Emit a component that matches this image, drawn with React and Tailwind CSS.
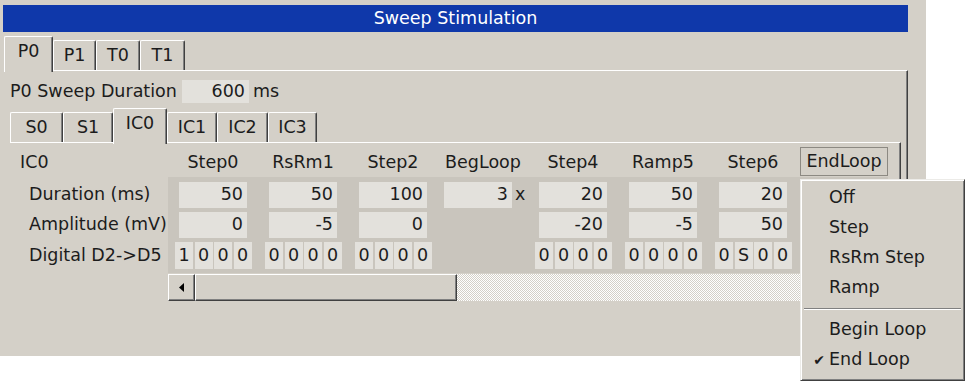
import React from "react";

const cols = [
  { name: "Step0", dur: "50", amp: "0", dig: ["1", "0", "0", "0"] },
  { name: "RsRm1", dur: "50", amp: "-5", dig: ["0", "0", "0", "0"] },
  { name: "Step2", dur: "100", amp: "0", dig: ["0", "0", "0", "0"] },
  { name: "BegLoop", loop: "3" },
  { name: "Step4", dur: "20", amp: "-20", dig: ["0", "0", "0", "0"] },
  { name: "Ramp5", dur: "50", amp: "-5", dig: ["0", "0", "0", "0"] },
  { name: "Step6", dur: "20", amp: "50", dig: ["0", "S", "0", "0"] },
  { name: "EndLoop", end: true },
];

function Tab({ label, w, active }) {
  if (active) {
    return (
      <div
        className={`relative z-10 -mb-[2px] h-[36px] ${w} bg-[#d4d0c8] border-l border-t border-white rounded-tl-[2px] rounded-tr-[2px] border-r border-r-[#404040] shadow-[inset_-1px_0_0_#808080] flex items-center justify-center pb-[6px]`}
      >
        {label}
      </div>
    );
  }
  return (
    <div
      className={`h-[30px] ${w} bg-[#d4d0c8] border-l border-t border-white rounded-tl-[2px] rounded-tr-[2px] border-r border-r-[#404040] shadow-[inset_-1px_0_0_#808080] flex items-center justify-center`}
    >
      {label}
    </div>
  );
}

function Field({ value, className = "" }) {
  return (
    <div className={`h-[26px] w-[68px] bg-[#e3e1dc] flex items-center justify-end pr-[4px] ${className}`}>
      {value}
    </div>
  );
}

function Digits({ values }) {
  return (
    <div className="ml-[7px] flex gap-[1.5px]">
      {values.map((v, i) => (
        <div key={i} className="h-[27px] w-[18px] bg-[#e3e1dc] flex items-center justify-center">
          {v}
        </div>
      ))}
    </div>
  );
}

function MenuItem({ label, checked }) {
  return (
    <div className="h-[30px] flex items-center">
      <div className="w-[28px] flex justify-end pr-[4px] text-[14px]">{checked ? "✔" : ""}</div>
      <span>{label}</span>
    </div>
  );
}

export default function App() {
  return (
    <div className="relative w-[967px] h-[381px] bg-white overflow-hidden font-['DejaVu_Sans',sans-serif] text-[17.5px] text-[#1c1c1c] leading-none">
      <div className="w-[926px] h-[356px] bg-[#d4d0c8] flex flex-col pl-[3px] pt-[5px]">
        <div className="w-[905px] h-[27px] bg-[#0f38aa] text-white flex items-center justify-center">
          Sweep Stimulation
        </div>

        <div className="h-[38px] flex items-end pl-[1px]">
          <Tab label="P0" w="w-[49px]" active />
          <Tab label="P1" w="w-[43px]" />
          <Tab label="T0" w="w-[44px]" />
          <Tab label="T1" w="w-[45px]" />
        </div>

        <div className="ml-[1px] w-[904px] flex-1 flex flex-col border-t border-white border-r border-r-[#404040] shadow-[inset_-1px_0_0_#808080] pl-[6px] pt-[9px]">
          <div className="h-[23px] flex items-center">
            <span className="w-[172px]">P0 Sweep Duration</span>
            <div className="h-[23px] w-[67px] bg-[#e3e1dc] flex items-center justify-end pr-[4px]">600</div>
            <span className="ml-[4px]">ms</span>
          </div>

          <div className="h-[39px] flex items-end">
            <Tab label="S0" w="w-[53px]" />
            <Tab label="S1" w="w-[50px]" />
            <Tab label="IC0" w="w-[54px]" active />
            <Tab label="IC1" w="w-[50px]" />
            <Tab label="IC2" w="w-[51px]" />
            <Tab label="IC3" w="w-[49px]" />
          </div>

          <div className="w-[891px] flex-1 flex flex-col border-t border-white border-r border-r-[#404040] shadow-[inset_-1px_0_0_#808080] pl-[1px] pt-[4px]">
            <div className="h-[29px] flex items-center">
              <div className="w-[157px] pl-[9px] pt-[2px]">IC0</div>
              {cols.map((c) =>
                c.end ? (
                  <div key={c.name} className="w-[90px] pl-[2px]">
                    <div className="h-[29px] w-[88px] border border-[#8c8982] flex items-center justify-center">
                      {c.name}
                    </div>
                  </div>
                ) : (
                  <div key={c.name} className="w-[90px] text-center pt-[2px]">
                    {c.name}
                  </div>
                )
              )}
            </div>

            <div className="mt-[1px] flex">
              <div className="w-[157px] pl-[18px] pt-[5px] flex flex-col gap-[4px]">
                <div className="h-[26px] flex items-center">Duration (ms)</div>
                <div className="h-[26px] flex items-center">Amplitude (mV)</div>
                <div className="h-[27px] flex items-center">Digital D2-&gt;D5</div>
              </div>
              <div className="w-[720px] bg-[#c9c5bd] pt-[5px] pb-[4px] flex">
                {cols.map((c) => (
                  <div key={c.name} className="w-[90px] flex flex-col gap-[4px]">
                    {c.loop ? (
                      <div className="h-[26px] flex items-center">
                        <Field value={c.loop} className="ml-[6px]" />
                        <span className="ml-[3px]">x</span>
                      </div>
                    ) : c.dur ? (
                      <>
                        <Field value={c.dur} className="ml-[11px]" />
                        <Field value={c.amp} className="ml-[11px]" />
                        <Digits values={c.dig} />
                      </>
                    ) : null}
                  </div>
                ))}
              </div>
            </div>

            <div className="mt-[1px] ml-[157px] w-[720px] h-[27px] flex bg-[repeating-conic-gradient(#ffffff_0%_25%,#d4d0c8_0%_50%)] bg-[length:2px_2px]">
              <div className="w-[27px] h-[27px] bg-[#d4d0c8] border-t border-l border-white border-b border-r border-b-[#404040] border-r-[#404040] shadow-[inset_-1px_-1px_0_#808080] flex items-center justify-center">
                <svg width="5" height="9" viewBox="0 0 5 9">
                  <polygon points="5,0 5,9 0,4.5" fill="#000" />
                </svg>
              </div>
              <div className="w-[262px] h-[27px] bg-[#d4d0c8] border-t border-l border-white border-b border-r border-b-[#404040] border-r-[#404040] shadow-[inset_-1px_-1px_0_#808080]" />
            </div>
          </div>
        </div>
      </div>

      <div className="absolute left-[800px] top-[179px] w-[165px] h-[202px] bg-[#d4d0c8] border-t border-l border-[#ecebe8] border-r border-b border-r-[#404040] border-b-[#404040] shadow-[inset_1px_1px_0_#ffffff,inset_-1px_-1px_0_#808080] pt-[3px] flex flex-col">
        <MenuItem label="Off" />
        <MenuItem label="Step" />
        <MenuItem label="RsRm Step" />
        <MenuItem label="Ramp" />
        <div className="h-[12px] flex flex-col justify-center px-[3px]">
          <div className="h-px bg-[#808080]" />
          <div className="h-px bg-white" />
        </div>
        <MenuItem label="Begin Loop" />
        <MenuItem label="End Loop" checked />
      </div>
    </div>
  );
}
